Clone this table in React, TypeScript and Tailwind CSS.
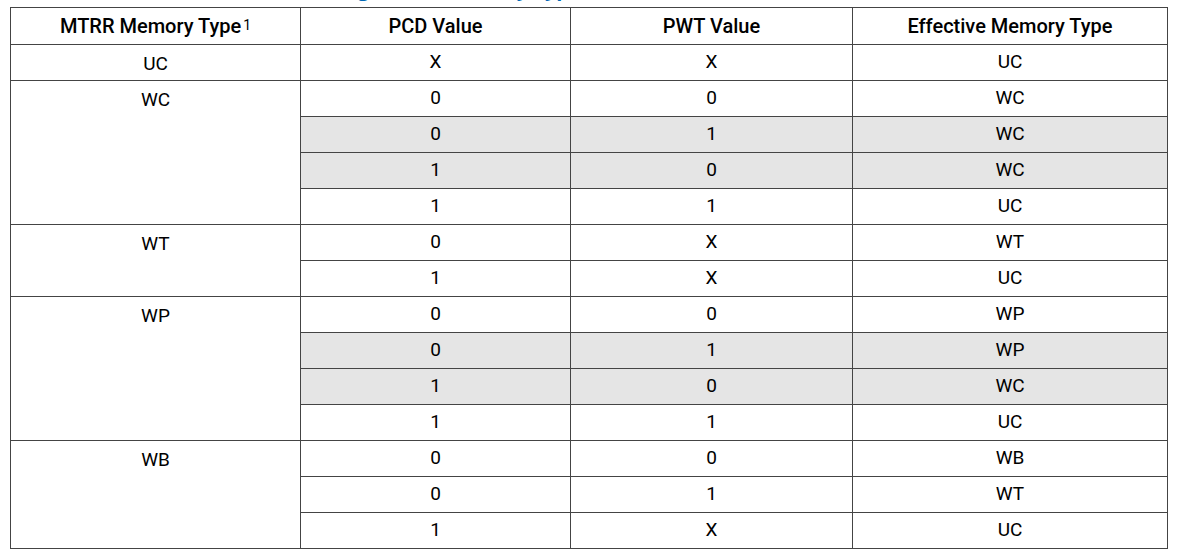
import * as React from "react";

type Row = { pcd: string; pwt: string; eff: string; shaded?: boolean };
type Group = { mtrr: string; rows: Row[] };

// ─── Table data ────────────────────────────────────────────────────────────────
const groups: Group[] = [
    { mtrr: "UC", rows: [{ pcd: "X", pwt: "X", eff: "UC" }] },
    {
        mtrr: "WC",
        rows: [
            { pcd: "0", pwt: "0", eff: "WC" },
            { pcd: "0", pwt: "1", eff: "WC", shaded: true },
            { pcd: "1", pwt: "0", eff: "WC", shaded: true },
            { pcd: "1", pwt: "1", eff: "UC" },
        ],
    },
    {
        mtrr: "WT",
        rows: [
            { pcd: "0", pwt: "X", eff: "WT" },
            { pcd: "1", pwt: "X", eff: "UC" },
        ],
    },
    {
        mtrr: "WP",
        rows: [
            { pcd: "0", pwt: "0", eff: "WP" },
            { pcd: "0", pwt: "1", eff: "WP", shaded: true },
            { pcd: "1", pwt: "0", eff: "WC", shaded: true },
            { pcd: "1", pwt: "1", eff: "UC" },
        ],
    },
    {
        mtrr: "WB",
        rows: [
            { pcd: "0", pwt: "0", eff: "WB" },
            { pcd: "0", pwt: "1", eff: "WT" },
            { pcd: "1", pwt: "X", eff: "UC" },
        ],
    },
];

const cell = "border border-[#444] text-center align-middle h-[36px] p-0 text-[19px] text-black";

export default function App() {
    return (
        <div className="w-[1178px] h-[555px] bg-white overflow-hidden font-['Roboto',sans-serif]">
            {/* Caption, cut off by the top edge */}
            <div className="h-[7px] overflow-hidden">
                <p className="-mt-[24px] pl-[125px] text-left text-[20px] leading-[26px] font-bold text-[#0068b5] whitespace-nowrap font-['Open_Sans',sans-serif]">
                    Table 11-7.&nbsp; Effective Page-Level Memory Types for Pentium III and More Recent Processor Families
                </p>
            </div>

            <table className="ml-[10px] border-collapse table-fixed w-[1157px] border border-[#444]">
                <colgroup>
                    <col className="w-[290px]" />
                    <col className="w-[270px]" />
                    <col className="w-[282px]" />
                    <col className="w-[315px]" />
                </colgroup>
                <thead>
                    <tr>
                        <th className={`${cell} h-[37px] font-medium text-[20px]`}>
                            MTRR Memory Type<sup className="text-[14px] font-normal relative -top-[3px] ml-[2px]">1</sup>
                        </th>
                        <th className={`${cell} h-[37px] font-medium text-[20px]`}>PCD Value</th>
                        <th className={`${cell} h-[37px] font-medium text-[20px]`}>PWT Value</th>
                        <th className={`${cell} h-[37px] font-medium text-[20px]`}>Effective Memory Type</th>
                    </tr>
                </thead>
                <tbody>
                    {groups.map((g) =>
                        g.rows.map((r, i) => (
                            <tr key={`${g.mtrr}-${i}`}>
                                {i === 0 && (
                                    <td rowSpan={g.rows.length} className={`${cell} align-top pt-[5px]`}>
                                        {g.mtrr}
                                    </td>
                                )}
                                <td className={`${cell} ${r.shaded ? "bg-[#e5e5e5]" : ""}`}>{r.pcd}</td>
                                <td className={`${cell} ${r.shaded ? "bg-[#e5e5e5]" : ""}`}>{r.pwt}</td>
                                <td className={`${cell} ${r.shaded ? "bg-[#e5e5e5]" : ""}`}>{r.eff}</td>
                            </tr>
                        ))
                    )}
                </tbody>
            </table>
        </div>
    );
}
